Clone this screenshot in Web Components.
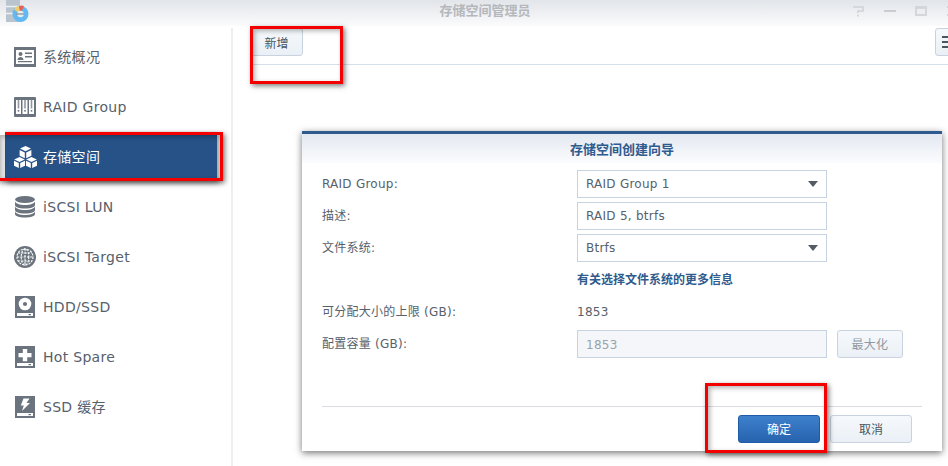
<!DOCTYPE html>
<html>
<head>
<meta charset="utf-8">
<style>
  html, body { margin: 0; height: 100%; overflow: hidden; background: #fff; }
  body { font-family: "DejaVu Sans", "Noto Sans CJK SC", sans-serif; color: #4a5560; }
</style>
</head>
<body>
<storage-window></storage-window>

<script>
const FONT = '"DejaVu Sans", "Noto Sans CJK SC", sans-serif';

const DRIVE = `<rect x="1" y="1" width="20" height="22" fill="#6b747e"/><rect x="3" y="18" width="16" height="3" fill="#fff"/><rect x="14.5" y="19" width="2.5" height="1.2" fill="#6b747e"/>`;

const ICONS = {
  overview: `<rect x="0" y="2" width="22" height="20" fill="#6b747e"/><rect x="2" y="5" width="18" height="14" fill="#fff"/>
    <circle cx="6.5" cy="9" r="2" fill="#6b747e"/><path d="M3.5 15c0-2 1.5-3 3-3s3 1 3 3z" fill="#6b747e"/>
    <rect x="11" y="7.5" width="7" height="1.5" fill="#6b747e"/><rect x="11" y="11" width="7" height="1.5" fill="#6b747e"/><rect x="4" y="16" width="14" height="1.2" fill="#6b747e"/>`,
  raid: `<rect x="0" y="2" width="22" height="20" rx="1" fill="#6b747e"/>
    <rect x="2" y="5" width="5" height="14" fill="#fff"/><rect x="8.5" y="5" width="5" height="14" fill="#fff"/><rect x="15" y="5" width="5" height="14" fill="#fff"/>
    <rect x="3.7" y="5" width="1.6" height="8.5" fill="#6b747e" opacity=".75"/><rect x="10.2" y="5" width="1.6" height="8.5" fill="#6b747e" opacity=".75"/><rect x="16.7" y="5" width="1.6" height="8.5" fill="#6b747e" opacity=".75"/>
    <rect x="3.7" y="15" width="1.6" height="1.6" fill="#6b747e"/><rect x="10.2" y="15" width="1.6" height="1.6" fill="#6b747e"/><rect x="16.7" y="15" width="1.6" height="1.6" fill="#6b747e"/>`,
  volume: `<g fill="#fff"><path d="M11.5 1l5.5 2.6-5.5 2.6L6 3.6z"/><path d="M5.6 5l5.2 2.5v5.8L5.6 10.8z"/><path d="M17.4 5v5.8l-5.2 2.5V7.5z"/>
    <path d="M5.5 12l5.3 2.5-5.3 2.5L.2 14.5z"/><path d="M0 15.8l4.8 2.3V23L0 20.7z"/><path d="M11 15.8v4.9L6.2 23v-4.9z"/>
    <path d="M17.5 12l5.3 2.5-5.3 2.5-5.3-2.5z"/><path d="M12 15.8l4.8 2.3V23L12 20.7z"/><path d="M23 15.8v4.9L18.2 23v-4.9z"/></g>`,
  lun: `<g fill="#6b747e"><ellipse cx="11" cy="4.5" rx="10" ry="3.5"/><path d="M1 6.5c1 2.2 4.5 3.5 10 3.5s9-1.300 10-3.500V10c0 2-4 3.500-10 3.500S1 12 1 10z"/>
    <path d="M1 11.500c1 2.200 4.500 3.500 10 3.500s9-1.300 10-3.500V15c0 2-4 3.500-10 3.500S1 17 1 15z"/><path d="M1 16.500c1 2.200 4.500 3.500 10 3.500s9-1.300 10-3.500V19c0 2-4 3.500-10 3.500S1 21 1 19z"/></g>`,
  target: `<circle cx="11" cy="12" r="11" fill="#6b747e"/><g fill="none" stroke="#fff" stroke-width="1.1" stroke-dasharray="2.2 1.1">
    <circle cx="11" cy="12" r="8"/><ellipse cx="11" cy="12" rx="3.8" ry="8"/><path d="M11 3.5v17M3 12h16M4 8h14M4 16h14"/></g>`,
  hdd: `${DRIVE}<circle cx="11" cy="9" r="6.3" fill="#fff"/><circle cx="11" cy="9" r="2.1" fill="#6b747e"/>`,
  spare: `${DRIVE}<path d="M8.8 4h4.4v4h4.300v4.200h-4.300v4H8.800v-4H4.500V8h4.300z" fill="#fff"/>`,
  cache: `${DRIVE}<path d="M9.500 3.500h6l-3 4.500h3.500L8 16l1.800-5.500H6.800z" fill="#fff"/>`
};

class TitleBar extends HTMLElement {
  constructor() {
    super();
    this.attachShadow({ mode: 'open' }).innerHTML = `
    <style>
      :host { display: flex; position: relative; align-items: center; justify-content: center; height: 26px; flex: none;
        background: linear-gradient(#e2e5e9, #fbfbfc); }
      .title { font: bold 13px/16px ${FONT}; color: #b4b8bd; margin: -4px 0 0 22px; }
      .logo { position: absolute; left: 6px; top: 0; }
      .tools { position: absolute; right: 0; top: 0; width: 100px; height: 26px; }
      svg.t { position: absolute; top: 6px; }
      .edge { position: absolute; left: 99px; top: 6px; width: 1px; height: 10px;
        background: linear-gradient(#cfd2d6 20%, transparent 20%, transparent 80%, #cfd2d6 80%); }
    </style>
    <svg class="logo" width="24" height="24" viewBox="0 0 24 24">
      <rect x="0" y="0" width="14" height="22" fill="#b9c4cf"/>
      <path d="M0 6.500h14M0 13.500h14" stroke="#eef1f4" stroke-width="1.5"/>
      <circle cx="14.500" cy="14" r="8" fill="#62b9f2"/>
      <path d="M14.500 14L8 9.500a8 8 0 0 1 5-3.500z" fill="#f0cf6a"/>
      <path d="M14.500 14L13 6a8 8 0 0 1 5-.1z" fill="#e9605a"/>
      <circle cx="14.500" cy="14" r="3.200" fill="#e8edf1"/>
      <rect x="10" y="13.300" width="8" height="1.4" fill="#8f98a1"/>
    </svg>
    <div class="title">存储空间管理员</div>
    <div class="tools">
      <svg class="t" style="left:4px" width="12" height="12" viewBox="0 0 12 12"><path d="M1 1h10v4H6v2M6 8.500v2" fill="none" stroke="#cfd2d6" stroke-width="1.6"/></svg>
      <svg class="t" style="left:36px" width="12" height="12" viewBox="0 0 12 12"><rect y="4" width="12" height="2" fill="#c8cbd0"/></svg>
      <svg class="t" style="left:67px" width="12" height="12" viewBox="0 0 12 12"><rect width="12" height="10" fill="#d4d6da"/><rect x="2" y="3" width="8" height="5" fill="#eceef0"/></svg>
      <span class="edge"></span>
    </div>`;
  }
}
customElements.define('title-bar', TitleBar);

class NavItem extends HTMLElement {
  constructor() {
    super();
    const icon = ICONS[this.getAttribute('icon')] || '';
    this.attachShadow({ mode: 'open' }).innerHTML = `
    <style>
      :host { display: flex; align-items: center; gap: 6px; height: 48px; margin: 0 14px 2px 5px; padding-left: 9px;
        font: 14px/18px ${FONT}; letter-spacing: .3px; color: #56616c; box-sizing: border-box; white-space: nowrap; }
      :host([active]) { background: #265287; color: #fff; box-shadow: 2px 2px 5px rgba(0,0,0,.45); }
      svg { flex: none; width: 23px; height: 24px; }
    </style>
    <svg viewBox="0 0 23 24">${icon}</svg>
    <slot></slot>`;
  }
}
customElements.define('nav-item', NavItem);

class SideNav extends HTMLElement {
  constructor() {
    super();
    this.attachShadow({ mode: 'open' }).innerHTML = `
    <style>
      :host { display: block; width: 233px; flex: none; box-sizing: border-box; margin-top: 2px; padding-top: 5px; border-right: 2px solid #eceef0; }
    </style>
    <slot></slot>`;
  }
}
customElements.define('side-nav', SideNav);

class SynoButton extends HTMLElement {
  constructor() {
    super();
    this.attachShadow({ mode: 'open' }).innerHTML = `
    <style>
      :host { display: flex; align-items: center; justify-content: center; box-sizing: border-box; height: 28px; padding: 1px 12px 0; flex: none;
        border: 1px solid #c8d3df; border-radius: 3px; font: 12px/16px ${FONT}; color: #4a5560;
        background: linear-gradient(#f6f9fc, #eaf0f6); }
      :host([primary]) { border-color: #1f5ba6; color: #fff; background: linear-gradient(#3e80cc, #2763ae); }
      :host([disabled]) { color: #8f99a3; }
    </style>
    <slot></slot>`;
  }
}
customElements.define('syno-button', SynoButton);

class FormRow extends HTMLElement {
  constructor() {
    super();
    this.attachShadow({ mode: 'open' }).innerHTML = `
    <style>
      :host { display: grid; grid-template-columns: 245px 250px auto; column-gap: 10px; align-items: center; min-height: 28px; margin-bottom: 4px;
        font: 12px/16px ${FONT}; letter-spacing: .25px; color: #56616c; }
    </style>
    <slot name="label"></slot><slot></slot><slot name="extra"></slot>`;
  }
}
customElements.define('form-row', FormRow);

class FieldBox extends HTMLElement {
  constructor() {
    super();
    this.attachShadow({ mode: 'open' }).innerHTML = `
    <style>
      :host { display: flex; align-items: center; justify-content: space-between; box-sizing: border-box; height: 28px; padding: 0 8px;
        border: 1px solid #c8d3e0; background: #fff; color: #56616c; }
      :host([disabled]) { background: #f4f6f9; color: #9aa3ac; padding-top: 1px; }
      .arrow { display: none; width: 0; height: 0; border: 5px solid transparent; border-top: 6px solid #535b64; border-bottom: 0; }
      :host([select]) .arrow { display: block; }
    </style>
    <span><slot></slot></span><span class="arrow"></span>`;
  }
}
customElements.define('field-box', FieldBox);

class WizardDialog extends HTMLElement {
  constructor() {
    super();
    this.attachShadow({ mode: 'open' }).innerHTML = `
    <style>
      :host { position: absolute; left: 302px; top: 131px; width: 640px; height: 320px; box-sizing: border-box; display: flex; flex-direction: column;
        background: #fff; border-top: 3px solid #2e5a8f; box-shadow: 0 2px 7px rgba(0,0,0,.55); }
      .head { height: 29px; flex: none; box-sizing: border-box; padding-top: 2px; display: flex; align-items: center; justify-content: center; font: bold 13px/16px ${FONT}; color: #2f5b8e;
        background: linear-gradient(#e3e8f1, #fbfcfd); }
      .body { flex: 1; padding: 7px 20px 0; }
      .foot { margin: 0 20px; height: 45px; flex: none; box-sizing: border-box; border-top: 1px solid #d9dde1; display: flex; justify-content: flex-end; align-items: flex-start; gap: 10px; padding: 8px 10px 0 0; }
      .foot ::slotted(syno-button) { width: 82px; }
    </style>
    <div class="head"><slot name="title"></slot></div>
    <div class="body"><slot></slot></div>
    <div class="foot"><slot name="footer"></slot></div>`;
  }
}
customElements.define('wizard-dialog', WizardDialog);

class RedMark extends HTMLElement {
  constructor() {
    super();
    this.attachShadow({ mode: 'open' }).innerHTML = `
    <style>
      :host { position: absolute; box-sizing: border-box; border: 3px solid #f50000; box-shadow: 2px 2px 5px rgba(0,0,0,.5), inset 2px 2px 5px rgba(0,0,0,.3); pointer-events: none; }
    </style>`;
  }
}
customElements.define('red-mark', RedMark);

class StorageWindow extends HTMLElement {
  constructor() {
    super();
    this.attachShadow({ mode: 'open' }).innerHTML = `
    <style>
      :host { display: flex; flex-direction: column; position: relative; width: 948px; height: 466px; overflow: hidden; background: #fff; }
      .main { flex: 1; display: flex; min-height: 0; }
      .content { flex: 1; min-width: 0; }
      .toolbar { display: flex; justify-content: space-between; height: 37px; box-sizing: border-box; margin: 2px 0 0 17px; border-bottom: 1px solid #d6e0ea; }
      .toolbar .add { width: 53px; padding-top: 3px; }
      .toolbar .menu { width: 20px; margin-right: -7px; padding: 0 0 0 5px; }
      .menu svg { display: block; }
      .link { font: bold 12px/16px ${FONT}; color: #2f5b8e; margin-left: 255px; height: 32px; padding-top: 6px; box-sizing: border-box; }
      .cut { clip-path: polygon(8px -10px, calc(100% + 10px) -10px, calc(100% + 10px) calc(100% + 10px), 0 calc(100% + 10px), 0 3px, 8px 3px); }
    </style>
    <title-bar></title-bar>
    <div class="main">
      <side-nav>
        <nav-item icon="overview">系统概况</nav-item>
        <nav-item icon="raid">RAID Group</nav-item>
        <nav-item icon="volume" active>存储空间</nav-item>
        <nav-item icon="lun">iSCSI LUN</nav-item>
        <nav-item icon="target">iSCSI Target</nav-item>
        <nav-item icon="hdd">HDD/SSD</nav-item>
        <nav-item icon="spare">Hot Spare</nav-item>
        <nav-item icon="cache">SSD 缓存</nav-item>
      </side-nav>
      <div class="content">
        <div class="toolbar">
          <syno-button class="add">新增</syno-button>
          <syno-button class="menu"><svg width="12" height="12" viewBox="0 0 12 12"><path d="M0 1h14M0 6h14M0 11h14" stroke="#4a5560" stroke-width="2"/></svg></syno-button>
        </div>
      </div>
    </div>
    <wizard-dialog>
      <span slot="title">存储空间创建向导</span>
      <form-row><span slot="label">RAID Group:</span><field-box select>RAID Group 1</field-box></form-row>
      <form-row><span slot="label">描述:</span><field-box>RAID 5, btrfs</field-box></form-row>
      <form-row><span slot="label">文件系统:</span><field-box select>Btrfs</field-box></form-row>
      <div class="link">有关选择文件系统的更多信息</div>
      <form-row><span slot="label">可分配大小的上限 (GB):</span><span>1853</span></form-row>
      <form-row><span slot="label">配置容量 (GB):</span><field-box disabled>1853</field-box><syno-button slot="extra" disabled style="width:66px">最大化</syno-button></form-row>
      <syno-button slot="footer" primary>确定</syno-button>
      <syno-button slot="footer">取消</syno-button>
    </wizard-dialog>
    <red-mark style="left:250px;top:26px;width:93px;height:58px"></red-mark>
    <red-mark class="cut" style="left:-3px;top:132px;width:226px;height:49px"></red-mark>
    <red-mark style="left:705px;top:383px;width:122px;height:70px"></red-mark>`;
  }
}
customElements.define('storage-window', StorageWindow);
</script>
</body>
</html>
